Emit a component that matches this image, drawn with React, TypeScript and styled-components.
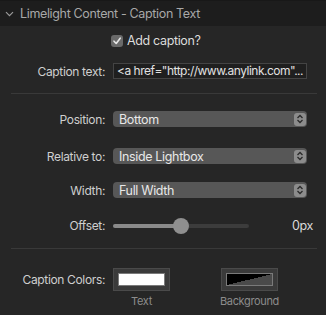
import styled, { createGlobalStyle } from "styled-components";

const GlobalStyle = createGlobalStyle`
  body {
    margin: 0;
    background: #262626;
    font-family: Inter, "Noto Sans", sans-serif;
    letter-spacing: -0.35px;
  }
`;

const ChevronDown = () => (
  <svg width="9" height="6" viewBox="0 0 9 6">
    <path d="M1 1.2 L4.5 4.7 L8 1.2" stroke="#9a9a9a" strokeWidth="1.2" fill="none" />
  </svg>
);

const Stepper = () => (
  <StepBox>
    <svg width="8" height="10" viewBox="0 0 8 10">
      <path d="M1.5 4 L4 1.5 L6.5 4 M1.5 6 L4 8.5 L6.5 6" stroke="#2a2a2a" strokeWidth="1.3" fill="none" />
    </svg>
  </StepBox>
);

const Check = () => (
  <svg width="10" height="10" viewBox="0 0 10 10">
    <path d="M2 5.2 L4.2 7.5 L8.2 2.2" stroke="#e6e6e6" strokeWidth="1.6" fill="none" strokeLinecap="round" strokeLinejoin="round" />
  </svg>
);

export default function App() {
  return (
    <Panel>
      <GlobalStyle />
      <Header>
        <ChevronDown />
        <HeaderTitle>Limelight Content - Caption Text</HeaderTitle>
      </Header>

      <CheckRow>
        <CheckBox>
          <Check />
        </CheckBox>
        <CheckLabel>Add caption?</CheckLabel>
      </CheckRow>

      <Row $top={15}>
        <Label>Caption text:</Label>
        <TextInput>&lt;a href="http://www.anylink.com"...</TextInput>
      </Row>

      <Divider $top={14} />

      <Row $top={17}>
        <Label>Position:</Label>
        <Select>
          <span>Bottom</span>
          <Stepper />
        </Select>
      </Row>

      <Row $top={21}>
        <Label>Relative to:</Label>
        <Select>
          <span>Inside Lightbox</span>
          <Stepper />
        </Select>
      </Row>

      <Row $top={18}>
        <Label>Width:</Label>
        <Select>
          <span>Full Width</span>
          <Stepper />
        </Select>
      </Row>

      <Row $top={20}>
        <Label>Offset:</Label>
        <SliderWrap>
          <Track>
            <Fill style={{ width: "50%" }} />
            <Thumb style={{ left: "50%" }} />
          </Track>
          <Value>0px</Value>
        </SliderWrap>
      </Row>

      <Divider $top={15} />

      <ColorRow>
        <ColorLabel>Caption Colors:</ColorLabel>
        <Swatches>
          <SwatchItem>
            <Swatch>
              <SwatchInner $bg="#ffffff" />
            </Swatch>
            <SwatchCaption>Text</SwatchCaption>
          </SwatchItem>
          <SwatchItem>
            <Swatch>
              <SwatchInner $bg="linear-gradient(to top left, #4a4a4a 50%, #000000 50%)" />
            </Swatch>
            <SwatchCaption>Background</SwatchCaption>
          </SwatchItem>
        </Swatches>
      </ColorRow>
    </Panel>
  );
}

const Panel = styled.div`
  width: 326px;
  height: 315px;
  background: #262626;
  color: #d2d2d2;
  font-size: 12px;
  overflow: hidden;
  border-top: 1px solid #181818;
  box-sizing: border-box;
`;

const Header = styled.div`
  display: flex;
  align-items: center;
  gap: 6px;
  height: 25px;
  padding-left: 5px;
  background: #1d1d1d;
`;

const HeaderTitle = styled.span`
  font-size: 12.5px;
  color: #a8a8a8;
`;

const CheckRow = styled.div`
  display: flex;
  align-items: center;
  gap: 4px;
  margin-top: 7px;
  padding-left: 111px;
`;

const CheckBox = styled.div`
  display: flex;
  align-items: center;
  justify-content: center;
  width: 12px;
  height: 12px;
  border-radius: 3px;
  background: #6a6a6a;
`;

const CheckLabel = styled.span`
  font-size: 12.5px;
  color: #dcdcdc;
`;

const Row = styled.div<{ $top: number }>`
  display: grid;
  grid-template-columns: 105px 1fr;
  column-gap: 8px;
  align-items: center;
  margin-top: ${(p) => p.$top}px;
  padding-right: 19px;
`;

const Label = styled.span`
  text-align: right;
  font-size: 12px;
  color: #cfcfcf;
`;

const TextInput = styled.div`
  height: 16px;
  box-sizing: border-box;
  border: 1px solid #444444;
  background: #1f1f1f;
  padding-left: 3px;
  font-size: 12px;
  line-height: 14px;
  letter-spacing: -0.5px;
  color: #e2e2e2;
  white-space: nowrap;
  overflow: hidden;
`;

const Divider = styled.div<{ $top: number }>`
  height: 1px;
  margin: ${(p) => p.$top}px 9px 0 11px;
  background: #393939;
`;

const Select = styled.div`
  display: flex;
  align-items: center;
  justify-content: space-between;
  height: 16px;
  padding: 0 1px 0 6px;
  border-radius: 4px;
  background: #575757;
  font-size: 12.5px;
  color: #e8e8e8;
`;

const StepBox = styled.div`
  display: flex;
  align-items: center;
  justify-content: center;
  width: 12px;
  height: 13px;
  border-radius: 3px;
  background: #8c8c8c;
`;

const SliderWrap = styled.div`
  display: flex;
  align-items: center;
  justify-content: space-between;
`;

const Track = styled.div`
  position: relative;
  width: 136px;
  height: 4px;
  border-radius: 2px;
  background: #3c3c3c;
`;

const Fill = styled.div`
  height: 100%;
  border-radius: 2px;
  background: #8a8a8a;
`;

const Thumb = styled.div`
  position: absolute;
  top: 50%;
  width: 16px;
  height: 16px;
  border-radius: 50%;
  background: #8f8f8f;
  transform: translate(-8px, -50%);
`;

const Value = styled.span`
  margin-right: -6px;
  font-size: 12.5px;
  color: #dadada;
`;

const ColorRow = styled.div`
  display: grid;
  grid-template-columns: 105px 1fr;
  column-gap: 8px;
  align-items: start;
  margin-top: 19px;
`;

const ColorLabel = styled(Label)`
  line-height: 23px;
`;

const Swatches = styled.div`
  display: flex;
  gap: 51px;
`;

const SwatchItem = styled.div`
  display: flex;
  flex-direction: column;
  align-items: center;
  gap: 3px;
  width: 57px;
`;

const Swatch = styled.div`
  width: 57px;
  height: 23px;
  box-sizing: border-box;
  padding: 4px;
  border: 1px solid #4a4a4a;
  background: #3a3a3a;
`;

const SwatchInner = styled.div<{ $bg: string }>`
  width: 100%;
  height: 100%;
  box-sizing: border-box;
  border: 1px solid #7a7a7a;
  background: ${(p) => p.$bg};
`;

const SwatchCaption = styled.span`
  font-size: 11px;
  color: #8c8c8c;
  white-space: nowrap;
`;
